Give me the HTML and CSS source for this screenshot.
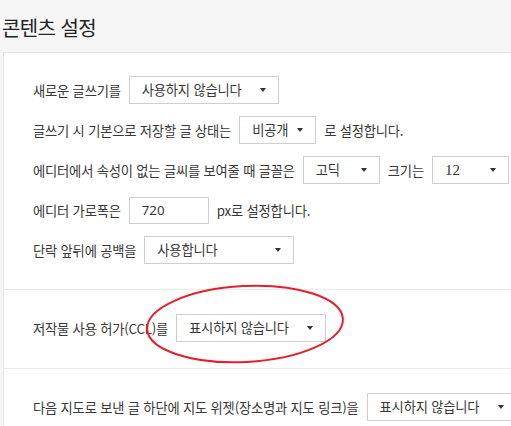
FILE: index.html
```html
<!DOCTYPE html>
<html lang="ko">
<head>
  <meta charset="UTF-8" />
  <meta name="viewport" content="width=device-width, initial-scale=1.0" />
  <title>콘텐츠 설정</title>
  <link rel="stylesheet" href="styles.css">
</head>
<body>
  <div class="page">
    <h2 class="title">콘텐츠 설정</h2>

    <div class="panel">
      <div class="section">
        <div class="row">
          <span>새로운 글쓰기를</span>
          <div class="select wide">사용하지 않습니다</div>
        </div>
        <div class="row">
          <span>글쓰기 시 기본으로 저장할 글 상태는</span>
          <div class="select short">비공개</div>
          <span>로 설정합니다.</span>
        </div>
        <div class="row">
          <span>에디터에서 속성이 없는 글씨를 보여줄 때 글꼴은</span>
          <div class="select short">고딕</div>
          <span>크기는</span>
          <div class="select short num">12</div>
        </div>
        <div class="row">
          <span>에디터 가로폭은</span>
          <div class="input">720</div>
          <span>px로 설정합니다.</span>
        </div>
        <div class="row">
          <span>단락 앞뒤에 공백을</span>
          <div class="select wide">사용합니다</div>
        </div>
      </div>

      <div class="section">
        <div class="row">
          <span>저작물 사용 허가(CCL)를</span>
          <div class="select wide">표시하지 않습니다</div>
        </div>
      </div>

      <div class="section">
        <div class="row">
          <span>다음 지도로 보낸 글 하단에 지도 위젯(장소명과 지도 링크)을</span>
          <div class="select wide">표시하지 않습니다</div>
        </div>
      </div>
    </div>
  </div>

  <!-- red marker drawn over the CCL option -->
  <svg class="marker" width="220" height="100" viewBox="0 0 220 100">
    <ellipse cx="105" cy="44" rx="98" ry="38" transform="rotate(-3 105 44)" fill="none" stroke="#e3202c" stroke-width="2" />
  </svg>
</body>
</html>
```

FILE: styles.css
```css
body {
  margin: 0;
  background-color: #f6f6f6;
  font-family: 'Noto Sans CJK KR', 'Noto Sans', sans-serif;
  color: #383838;
  overflow: hidden;
}

.page {
  padding-left: 2px;
}

.title {
  margin: 0;
  padding-top: 14px;
  font-size: 20px;
  line-height: 28px;
  font-weight: normal;
  letter-spacing: -0.6px;
  color: #222;
}

.panel {
  margin: 10px 0 0 1px;
  width: 620px;
  background-color: #ffffff;
  border: 1px solid #e3e3e3;
  border-right: none;
}

.section {
  padding: 23px 0 25px 29px;
  display: flex;
  flex-direction: column;
  gap: 12px;
}

.section + .section {
  border-top: 1px solid #ececec;
  padding-top: 24px;
  padding-bottom: 26px;
}

.row {
  display: flex;
  align-items: center;
  gap: 8px;
  height: 28px;
  font-size: 13.3px;
  letter-spacing: -0.2px;
  white-space: nowrap;
}

.select {
  position: relative;
  box-sizing: border-box;
  height: 28px;
  line-height: 26px;
  padding-left: 12px;
  border: 1px solid #cfcfcf;
  background-color: #fff;
}

.select::after {
  content: "";
  position: absolute;
  right: 12px;
  top: 11px;
  border-left: 3.5px solid transparent;
  border-right: 3.5px solid transparent;
  border-top: 4px solid #333;
}

.wide {
  width: 150px;
}

.short {
  width: 77px;
}

.num {
  font-family: 'Liberation Serif', serif;
  font-size: 15px;
  letter-spacing: 0;
}

.input {
  box-sizing: border-box;
  width: 80px;
  height: 27px;
  line-height: 25px;
  padding-left: 12px;
  border: 1px solid #cfcfcf;
  font-family: 'Noto Sans', sans-serif;
  letter-spacing: 0;
}

.marker {
  position: absolute;
  left: 140px;
  top: 280px;
}
```
